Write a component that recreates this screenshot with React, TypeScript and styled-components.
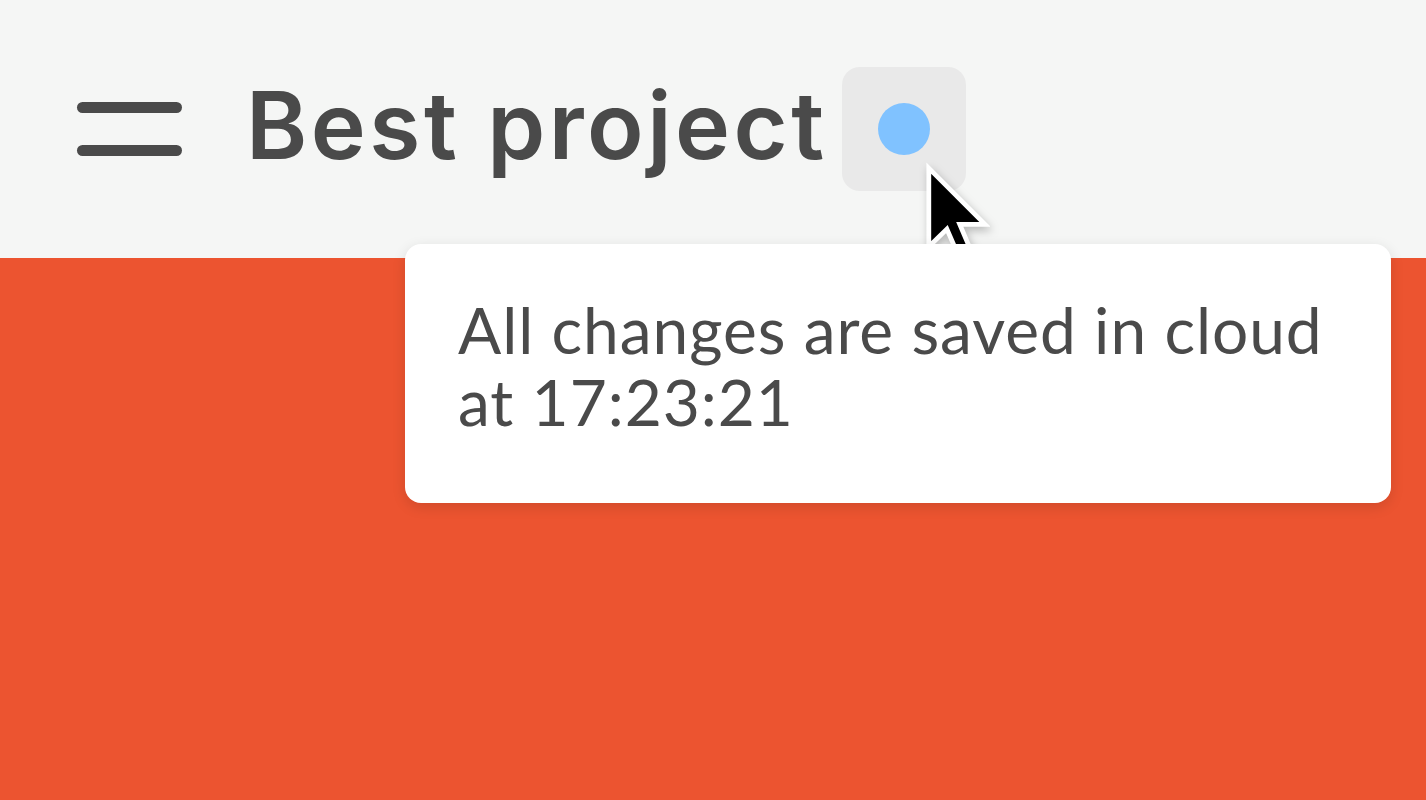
import styled, { createGlobalStyle } from "styled-components";

const Global = createGlobalStyle`
  html, body { margin: 0; padding: 0; }
  body { background: #ec5430; overflow: hidden; }
`;

const Page = styled.div`
  width: 1426px;
  height: 800px;
  position: relative;
  display: flex;
  flex-direction: column;
  background: #ec5430;
`;

const Header = styled.header`
  height: 258px;
  background: #f5f6f5;
  display: flex;
  align-items: center;
  padding-left: 77px;
  box-sizing: border-box;
`;

const Burger = styled.div`
  width: 105px;
  display: flex;
  flex-direction: column;
  gap: 32px;
  margin-right: 64px;
`;

const Bar = styled.span`
  display: block;
  height: 11px;
  border-radius: 6px;
  background: #4a4a4a;
`;

const Title = styled.h1`
  margin: -8px 14px 0 0;
  font-family: Inter, "Liberation Sans", sans-serif;
  font-weight: 600;
  font-size: 93px;
  letter-spacing: 3.5px;
  color: #4a4a4a;
  line-height: 1;
`;

const SyncButton = styled.div`
  position: relative;
  width: 124px;
  height: 124px;
  border-radius: 18px;
  background: #e9e9e9;
  display: flex;
  align-items: center;
  justify-content: center;
`;

const Dot = styled.span`
  width: 52px;
  height: 52px;
  border-radius: 50%;
  background: #80c2ff;
`;

const Cursor = styled.svg`
  position: absolute;
  left: 78px;
  top: 94px;
  filter: drop-shadow(2px 4px 4px rgba(0, 0, 0, 0.25));
`;

const Tooltip = styled.div`
  position: absolute;
  left: 405px;
  top: 244px;
  width: 986px;
  height: 259px;
  box-sizing: border-box;
  background: #fff;
  border-radius: 16px;
  box-shadow: 0 4px 14px rgba(0, 0, 0, 0.12);
  padding: 50px 0 0 53px;
  font-family: Lato, "Open Sans", sans-serif;
  font-size: 64px;
  line-height: 72px;
  color: #4a4a4a;
  letter-spacing: 0.95px;
`;

export default function App() {
  return (
    <Page>
      <Global />
      <Header>
        <Burger>
          <Bar />
          <Bar />
        </Burger>
        <Title>Best project</Title>
        <SyncButton>
          <Dot />
          <Cursor width="70" height="100" viewBox="-1 -1 14 21">
            <path
              d="M0.5 0.5 L0.5 17 L4.3 13.3 L7 19.5 L9.6 18.4 L7 12.3 L12.3 12.3 Z"
              fill="#000"
              stroke="#fff"
              strokeWidth="1"
              strokeLinejoin="miter"
            />
          </Cursor>
        </SyncButton>
      </Header>
      <Tooltip>
        All changes are saved in cloud
        <br />
        at 17:23:21
      </Tooltip>
    </Page>
  );
}
